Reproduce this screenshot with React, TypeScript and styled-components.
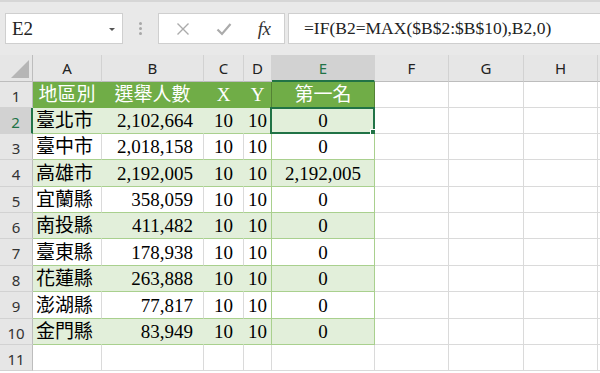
import styled, { createGlobalStyle, css } from 'styled-components'

const GlobalStyle = createGlobalStyle`
  html, body {
    margin: 0;
    padding: 0;
    background: #ffffff;
  }
  body {
    width: 600px;
    height: 373px;
    overflow: hidden;
  }
`

const SERIF = `"Liberation Serif", "Noto Sans CJK TC", serif`
const SANS = `"Noto Sans", "Liberation Sans", sans-serif`

const Window = styled.div`
  width: 600px;
  height: 373px;
  overflow: hidden;
  background: #ffffff;
  display: flex;
  flex-direction: column;
`

const Toolbar = styled.div`
  height: 55px;
  box-sizing: border-box;
  background: #e9e9e9;
  border-top: 2px solid #d6d6d6;
  display: flex;
  align-items: flex-start;
  padding: 11px 0 0 5px;
`

const Box = styled.div`
  height: 31px;
  box-sizing: border-box;
  background: #ffffff;
  border: 1px solid #cfcfcf;
  display: flex;
  align-items: center;
`

const NameBox = styled(Box)`
  width: 118px;
  padding: 0 7px 0 6px;
  justify-content: space-between;
  font-family: ${SERIF};
  font-size: 19px;
  color: #222;
`

const Caret = styled.span`
  width: 0;
  height: 0;
  border-left: 3px solid transparent;
  border-right: 3px solid transparent;
  border-top: 3px solid #555;
  margin-top: 1px;
`

const Grip = styled.div`
  width: 35px;
  height: 31px;
  display: flex;
  flex-direction: column;
  align-items: center;
  justify-content: center;
  gap: 2px;
`

const Dot = styled.span`
  width: 3px;
  height: 3px;
  border-radius: 50%;
  background: #a8a8a8;
`

const ButtonGroup = styled(Box)`
  width: 127px;
  padding: 0 12px 0 16px;
  justify-content: space-between;
`

const IconButton = styled.span<{ $dark?: boolean }>`
  display: flex;
  align-items: center;
  justify-content: center;
  width: 16px;
  height: 16px;
  color: ${({ $dark }) => ($dark ? '#333' : '#ababab')};
`

const Fx = styled.span`
  font-family: ${SERIF};
  font-style: italic;
  font-size: 19px;
  color: #333;
  letter-spacing: -0.5px;
`

const FormulaBox = styled(Box)`
  flex: 1;
  margin-left: 3px;
  border-right: none;
  padding-left: 15px;
  font-family: ${SERIF};
  font-size: 17.5px;
  color: #222;
  white-space: nowrap;
`

const Sheet = styled.div`
  display: grid;
  grid-template-columns: 33px 69px 102px 40px 28px 103px 74px 75px 74px 1fr;
  grid-template-rows: 27px 26px 26px 26px 27px 26px 26px 27px 26px 27px 26px 26px;
`

const Corner = styled.div`
  background: #e6e6e6;
  border-right: 1px solid #bdbdbd;
  border-bottom: 1px solid #bdbdbd;
  box-sizing: border-box;
  display: flex;
  align-items: flex-end;
  justify-content: flex-end;
  padding: 0 3px 3px 0;
`

const CornerMark = styled.span`
  width: 0;
  height: 0;
  border-left: 18px solid transparent;
  border-bottom: 18px solid #b6b6b6;
`

const ColHead = styled.div<{ $active?: boolean }>`
  box-sizing: border-box;
  display: flex;
  align-items: center;
  justify-content: center;
  font-family: ${SANS};
  font-size: 15px;
  background: #e6e6e6;
  color: #222;
  border-right: 1px solid #d2d2d2;
  border-bottom: 1px solid #bdbdbd;
  ${({ $active }) =>
    $active &&
    css`
      background: #d2d2d2;
      color: #217346;
      border-bottom: 2px solid #217346;
    `}
`

const RowHead = styled.div<{ $active?: boolean }>`
  box-sizing: border-box;
  display: flex;
  align-items: center;
  justify-content: center;
  padding-top: 2px;
  font-family: ${SANS};
  font-size: 15px;
  background: #e6e6e6;
  color: #333;
  border-right: 1px solid #bdbdbd;
  border-bottom: 1px solid #d2d2d2;
  ${({ $active }) =>
    $active &&
    css`
      background: #d2d2d2;
      color: #217346;
      border-right: 2px solid #217346;
    `}
`

type Tone = 'head' | 'band' | 'plain' | 'empty'

const toneBg: Record<Tone, string> = {
  head: '#70ad47',
  band: '#e2efda',
  plain: '#ffffff',
  empty: '#ffffff'
}

const Cell = styled.div<{
  $tone: Tone
  $align?: 'left' | 'right' | 'center'
  $edge?: string
  $rowLine?: string
}>`
  position: relative;
  box-sizing: border-box;
  display: flex;
  align-items: flex-end;
  padding: 0 ${({ $align }) => ($align === 'right' ? '10px' : '3px')} 0 3px;
  justify-content: ${({ $align }) =>
    $align === 'right' ? 'flex-end' : $align === 'center' ? 'center' : 'flex-start'};
  background: ${({ $tone }) => toneBg[$tone]};
  color: ${({ $tone }) => ($tone === 'head' ? '#ffffff' : '#000000')};
  font-family: ${SERIF};
  font-size: 19px;
  line-height: 24px;
  white-space: nowrap;
  border-bottom: 1px solid ${({ $rowLine }) => $rowLine ?? '#dadada'};
  border-right: 1px solid ${({ $edge }) => $edge ?? '#dadada'};
`

const Selection = styled.span`
  position: absolute;
  left: -2px;
  top: -1px;
  right: -1px;
  bottom: -1px;
  border: 2px solid #217346;
  pointer-events: none;
`

const Handle = styled.span`
  position: absolute;
  right: -4px;
  bottom: -4px;
  width: 5px;
  height: 5px;
  background: #217346;
  border: 1px solid #ffffff;
`

const columns = ['A', 'B', 'C', 'D', 'E', 'F', 'G', 'H', '']

const header = ['地區別', '選舉人數', 'X', 'Y', '第一名']

const data = [
  ['臺北市', '2,102,664', '10', '10', '0'],
  ['臺中市', '2,018,158', '10', '10', '0'],
  ['高雄市', '2,192,005', '10', '10', '2,192,005'],
  ['宜蘭縣', '358,059', '10', '10', '0'],
  ['南投縣', '411,482', '10', '10', '0'],
  ['臺東縣', '178,938', '10', '10', '0'],
  ['花蓮縣', '263,888', '10', '10', '0'],
  ['澎湖縣', '77,817', '10', '10', '0'],
  ['金門縣', '83,949', '10', '10', '0']
]

const aligns: ('left' | 'right' | 'center')[] = ['left', 'right', 'center', 'center', 'center']

const TABLE_LINE = '#a9d08e'

const XIcon = () => (
  <svg width="14" height="14" viewBox="0 0 14 14">
    <path d="M1.5 1.5 L12.5 12.5 M12.5 1.5 L1.5 12.5" stroke="currentColor" strokeWidth="1.4" fill="none" />
  </svg>
)

const CheckIcon = () => (
  <svg width="16" height="14" viewBox="0 0 16 14">
    <path d="M1.5 7.5 L6 12 L14.5 2" stroke="currentColor" strokeWidth="2.2" fill="none" />
  </svg>
)

const App: React.FC = () => {
  const renderTableRow = (cells: string[], r: number) => {
    const tone: Tone = r === 0 ? 'head' : r % 2 === 1 ? 'band' : 'plain'
    const fill = toneBg[tone]
    const sideGreen = r === 0 ? '#548235' : TABLE_LINE
    return cells.map((text, c) => {
      let edge: string | undefined
      if (c === 3 || c === 4) edge = sideGreen
      else if (tone !== 'plain') edge = fill
      const selected = r === 1 && c === 4
      return (
        <Cell
          key={`${r}-${c}`}
          $tone={tone}
          $align={r === 0 ? 'center' : aligns[c]}
          $edge={edge}
          $rowLine={r === 0 ? '#70ad47' : TABLE_LINE}
        >
          {text}
          {selected && (
            <Selection>
              <Handle />
            </Selection>
          )}
        </Cell>
      )
    })
  }

  const emptyCells = (r: number, from: number) =>
    columns.slice(from).map((_, i) => <Cell key={`e-${r}-${i}`} $tone="empty" />)

  const rows = [header, ...data]

  return (
    <Window>
      <GlobalStyle />
      <Toolbar>
        <NameBox>
          <span>E2</span>
          <Caret />
        </NameBox>
        <Grip>
          <Dot />
          <Dot />
          <Dot />
        </Grip>
        <ButtonGroup>
          <IconButton>
            <XIcon />
          </IconButton>
          <IconButton>
            <CheckIcon />
          </IconButton>
          <IconButton $dark>
            <Fx>fx</Fx>
          </IconButton>
        </ButtonGroup>
        <FormulaBox>=IF(B2=MAX($B$2:$B$10),B2,0)</FormulaBox>
      </Toolbar>
      <Sheet>
        <Corner>
          <CornerMark />
        </Corner>
        {columns.map((col, i) => (
          <ColHead key={`h-${i}`} $active={col === 'E'}>
            {col}
          </ColHead>
        ))}
        {rows.map((cells, r) => [
          <RowHead key={`r-${r}`} $active={r === 1}>
            {r + 1}
          </RowHead>,
          ...renderTableRow(cells, r),
          ...emptyCells(r, 5)
        ])}
        <RowHead $active={false}>11</RowHead>
        {emptyCells(10, 0)}
      </Sheet>
    </Window>
  )
}

export default App
